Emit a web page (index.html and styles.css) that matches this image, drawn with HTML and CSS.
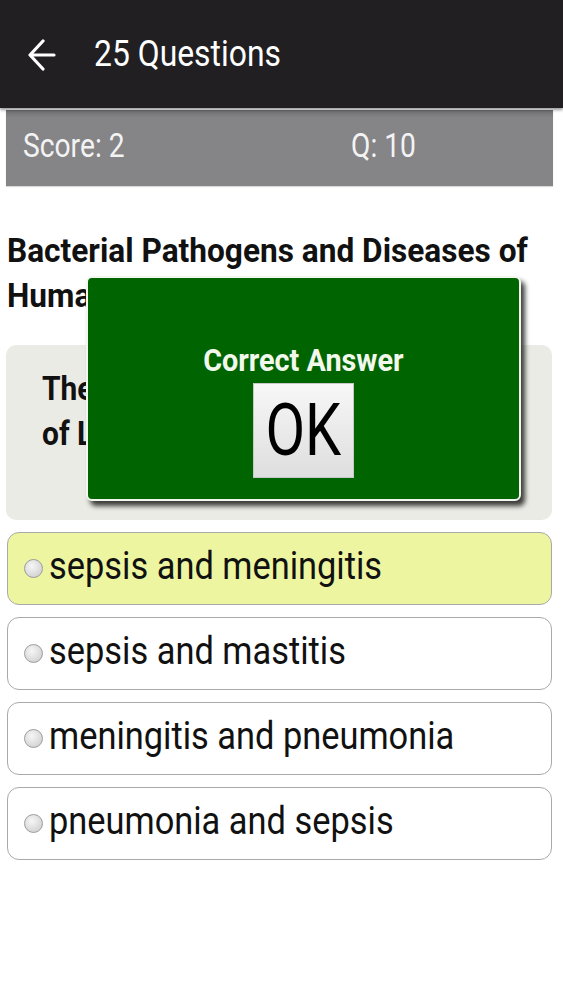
FILE: index.html
```html
<!DOCTYPE html>
<html>
<head>
<meta charset="utf-8">
<link rel="stylesheet" href="styles.css">
</head>
<body>
<div class="app">
  <header class="topbar">
    <svg class="back" width="28" height="34" viewBox="0 0 28 34"><path d="M26 17H3M15 3L2 17l13 14" fill="none" stroke="#fff" stroke-width="3.2" stroke-linecap="round" stroke-linejoin="round"/></svg>
    <span class="title cond">25 Questions</span>
  </header>
  <div class="scorebar">
    <span class="score"><span class="cond">Score: 2</span></span>
    <span class="qnum"><span class="cond">Q: 10</span></span>
  </div>
  <main class="content">
    <h1 class="topic">Bacterial Pathogens and Diseases of Humans</h1>
    <div class="question"><div class="question-text">The two most common diseases<br>of Listeria monocytogenes are</div></div>
    <ul class="options">
      <li class="option selected"><span class="radio"></span><span class="opt-text">sepsis and meningitis</span></li>
      <li class="option"><span class="radio"></span><span class="opt-text">sepsis and mastitis</span></li>
      <li class="option"><span class="radio"></span><span class="opt-text">meningitis and pneumonia</span></li>
      <li class="option"><span class="radio"></span><span class="opt-text">pneumonia and sepsis</span></li>
    </ul>
  </main>
  <div class="dialog">
    <div class="dialog-title">Correct Answer</div>
    <button class="ok"><span class="ok-text">OK</span></button>
  </div>
</div>
</body>
</html>
```
FILE: styles.css
```css
* { box-sizing: border-box; }
html, body { margin: 0; padding: 0; background: #fff; overflow: hidden; }
body { font-family: "Roboto", "Liberation Sans", sans-serif; width: 563px; height: 1000px; }
.app { position: relative; width: 563px; height: 1000px; overflow: hidden; }
.cond { display: inline-block; transform-origin: left center; }

.topbar { height: 108px; background: #211f22; display: flex; align-items: center; padding-left: 28px; box-shadow: 0 2px 3px rgba(0,0,0,0.4); position: relative; z-index: 1; }
.back { margin-right: 38px; margin-top: 2px; flex: none; }
.title { color: #fff; font-size: 36px; transform: scaleX(0.885); white-space: nowrap; }

.scorebar { margin: 2px 10px 0 6px; height: 76px; background: linear-gradient(#6f6e71 0, #858487 8px, #858487 100%); display: flex; color: #f3f3f3; font-size: 34px; padding: 15px 0 0 17px; line-height: 40px; box-shadow: 0 1px 1px rgba(0,0,0,0.15); }
.score { width: 328px; flex: none; }
.scorebar .cond { transform: scaleX(0.83); white-space: nowrap; }

.content { padding: 0 11px 0 6px; }
.topic { width: 586px; transform: scaleX(0.93); transform-origin: left top; font-size: 34px; font-weight: bold; line-height: 45px; margin: 42px 0 0 1px; color: #111; }
.question { margin-top: 27px; background: #ebebe5; border-radius: 10px; height: 175px; padding: 21px 0 0 36px; overflow: hidden; }
.question-text { width: 560px; transform: scaleX(0.88); transform-origin: left top; font-size: 34px; font-weight: bold; line-height: 45px; color: #111; white-space: nowrap; }

.options { list-style: none; margin: 12px 0 0 1px; padding: 0; display: flex; flex-direction: column; gap: 12px; }
.option { height: 73px; border: 1.5px solid #a9a9a9; border-radius: 12px; background: #fff; display: flex; align-items: center; padding-left: 16px; font-size: 38px; color: #111; }
.option.selected { background: #eef5a0; }
.radio { width: 19px; height: 19px; border-radius: 50%; border: 1.5px solid #9c9c9c; background: radial-gradient(circle at 40% 35%, #f6f6f6, #c9c9c9); margin-right: 6px; flex: none; }
.opt-text { display: inline-block; transform: scaleX(0.905); transform-origin: left center; white-space: nowrap; margin-bottom: 6px; }

.dialog { position: absolute; left: 86px; top: 276px; width: 435px; height: 225px; background: #006400; border: 2px solid #f2f7ee; border-radius: 6px; box-shadow: 4px 5px 5px rgba(0,0,0,0.75); display: flex; flex-direction: column; align-items: center; }
.dialog-title { color: #f2f8ec; font-size: 32px; font-weight: bold; margin-top: 63px; transform: scaleX(0.9); white-space: nowrap; }
.ok { margin-top: 4px; width: 101px; height: 95px; border: 1px solid #c8c8c8; border-radius: 0; background: linear-gradient(#f7f7f7, #dedede); font-family: inherit; font-size: 72px; line-height: normal; color: #000; padding: 0; display: flex; align-items: center; justify-content: center; }
.ok-text { display: inline-block; transform: scaleX(0.8); }
```
